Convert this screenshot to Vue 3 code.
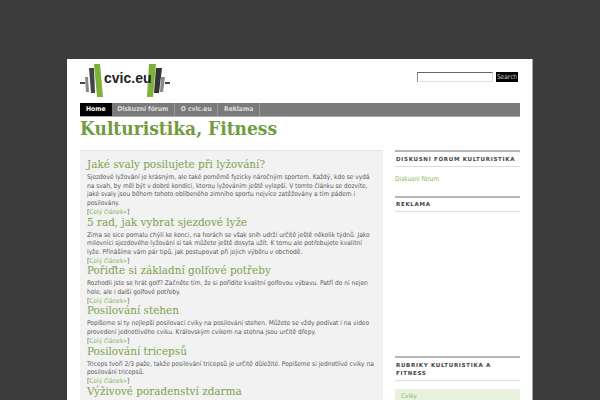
<script setup>
const posts = [
  { t: 'Jaké svaly posilujete při lyžování?', p: 'Sjezdové lyžování je krásným, ale také poměmě fyzicky náročným sportem. Každý, kdo se vydá na svah, by měl být v dobré kondici, kterou lyžováním ještě vylepší. V tomto článku se dozvíte, jaké svaly jsou během tohoto oblíbeného zimního sportu nejvíce zatěžovány a tím pádem i posilovány.' },
  { t: '5 rad, jak vybrat sjezdové lyže', p: 'Zima se sice pomalu chýlí ke konci, na horách se však sníh udrží určitě ještě několik týdnů. Jako milovníci sjezdového lyžování si tak můžete ještě dosyta užít. K tomu ale potřebujete kvalitní lyže. Přinášíme vám pár tipů, jak postupovat při jejich výběru v obchodě.' },
  { t: 'Pořiďte si základní golfové potřeby', p: 'Rozhodli jste se hrát golf? Začněte tím, že si pořídíte kvalitní golfovou výbavu. Patří do ní nejen hole, ale i další golfové potřeby.' },
  { t: 'Posilování stehen', p: 'Popíšeme si ty nejlepší posilovací cviky na posilování stehen. Můžete se vždy podívat i na video provedení jednotlivého cviku. Královským cvikem na stehna jsou určitě dřepy.' },
  { t: 'Posilování tricepsů', p: 'Triceps tvoří 2/3 paže, takže posilování tricepsů je určitě důležité. Popíšeme si jednotlivé cviky na posilování tricepsů.' },
  { t: 'Výživové poradenství zdarma', p: '' }
]
const nav = ['Home', 'Diskuzní fórum', 'O cvic.eu', 'Reklama']
</script>

<template>
  <div class="page">
    <div class="wrap">
      <header class="head">
        <div class="logo">
          <svg width="92" height="34" viewBox="0 0 92 34">
            <rect x="0" y="18" width="5" height="2" fill="#444" />
            <polygon points="5,13 8,13 9,28 6,28" fill="#888" />
            <polygon points="9,4 14,4 15,29 11,29" fill="#444" />
            <polygon points="14,0 20,0 23,33 17,33" fill="#7fb03c" />
            <polygon points="69,0 76,0 73,33 67,33" fill="#7fb03c" />
            <polygon points="76,4 82,4 79,29 74,29" fill="#333" />
            <polygon points="81,13 85,13 83,28 80,28" fill="#888" />
            <rect x="85" y="18" width="5" height="2" fill="#444" />
            <text x="24" y="19" class="logotext">cvic.eu</text>
          </svg>
        </div>
        <div class="search">
          <input class="field" type="text" />
          <button class="btn">Search</button>
        </div>
      </header>
      <nav class="nav">
        <a v-for="(n, i) in nav" :key="n" class="item" :class="{ on: i === 0 }">{{ n }}</a>
      </nav>
      <h1 class="title">Kulturistika, Fitness</h1>
      <div class="cols">
        <main class="main">
          <article v-for="a in posts" :key="a.t">
            <h2 class="ph">{{ a.t }}</h2>
            <p v-if="a.p" class="pt">{{ a.p }}</p>
            <div v-if="a.p" class="more">[<a>Celý článek»</a>]</div>
          </article>
        </main>
        <aside class="side">
          <h3 class="wt">Diskusní fórum Kulturistika</h3>
          <div class="link">Diskusní fórum</div>
          <h3 class="wt">Reklama</h3>
          <div class="ad"></div>
          <h3 class="wt">Rubriky Kulturistika a Fitness</h3>
          <div class="cat">Cviky</div>
        </aside>
      </div>
    </div>
  </div>
</template>

<style>
html, body { margin: 0; background: #3c3c3c; overflow: hidden; }
</style>

<style scoped>
.page { width: 600px; height: 400px; overflow: hidden; background: #3c3c3c; padding-top: 59px; box-sizing: border-box; }
.wrap { width: 440px; margin-left: 67px; height: 341px; background: #fff; border-right: 1px solid #a8a8a8; padding: 0 12px 0 13px; overflow: hidden; font-family: "DejaVu Sans", sans-serif; }
.head { display: flex; justify-content: space-between; height: 44px; }
.logo { padding-top: 5px; }
.logotext { font: bold 14px "Liberation Sans", sans-serif; fill: #222; }
.search { display: flex; align-items: flex-start; gap: 3px; padding-top: 13px; margin-right: 2px; }
.field { width: 74px; height: 8px; padding: 0; margin: 0; border: 1px solid; border-color: #666 #ddd #ddd #888; background: #fff; }
.btn { width: 22px; height: 10px; padding: 0; margin: 0; border: 0; background: #000; color: #ccc; font: 6.55px/10px "DejaVu Sans Condensed", "DejaVu Sans", sans-serif; font-stretch: condensed; overflow: hidden; }
.nav { display: flex; height: 13px; background: #7a7a7a; border-bottom: 1px solid #aaa; }
.item { display: block; padding: 0 5.7px; font: bold 6.7px/13px "DejaVu Sans Condensed", "DejaVu Sans", sans-serif; font-stretch: condensed; color: #ddd; border-right: 1px solid #999; }
.item.on { background: #000; color: #fff; border-right: 0; padding: 0 6px; }
.title { margin: 0; font: bold 19px/22px "DejaVu Serif Condensed", "DejaVu Serif", serif; font-stretch: condensed; color: #6f9c3e; height: 33px; }
.cols { display: flex; gap: 12px; }
.main { width: 303px; flex: none; box-sizing: border-box; background: #f2f2f2; border-top: 1px solid #e4e4e4; padding: 8px 7px 0; height: 260px; overflow: hidden; }
.ph { margin: 0; font: normal 11.6px/11px "DejaVu Serif Condensed", "DejaVu Serif", serif; font-stretch: condensed; color: #7ba34a; }
.pt { margin: 3px 0 0; font: 6.55px/8.7px "DejaVu Sans Condensed", "DejaVu Sans", sans-serif; font-stretch: condensed; color: #5a5a5a; }
.more { font: 6.55px/8.7px "DejaVu Sans Condensed", "DejaVu Sans", sans-serif; font-stretch: condensed; color: #5a5a5a; }
.more a { color: #8cb35e; }
.side { flex: 1; }
.wt { margin: 0; border-top: 2px solid #b5b5b5; border-bottom: 1px solid #ddd; padding: 2.5px 1px; font: bold 5.5px/8.5px "DejaVu Sans", sans-serif; letter-spacing: 0.7px; text-transform: uppercase; color: #444; }
.link { font: 6.55px/8px "DejaVu Sans Condensed", "DejaVu Sans", sans-serif; font-stretch: condensed; color: #8cb35e; padding: 8px 0 13px; }
.ad { height: 144px; }
.cat { margin-top: 8px; background: #e9f2de; padding: 3px 6px; font: 6.55px/8px "DejaVu Sans Condensed", "DejaVu Sans", sans-serif; font-stretch: condensed; color: #8cb35e; }
</style>
